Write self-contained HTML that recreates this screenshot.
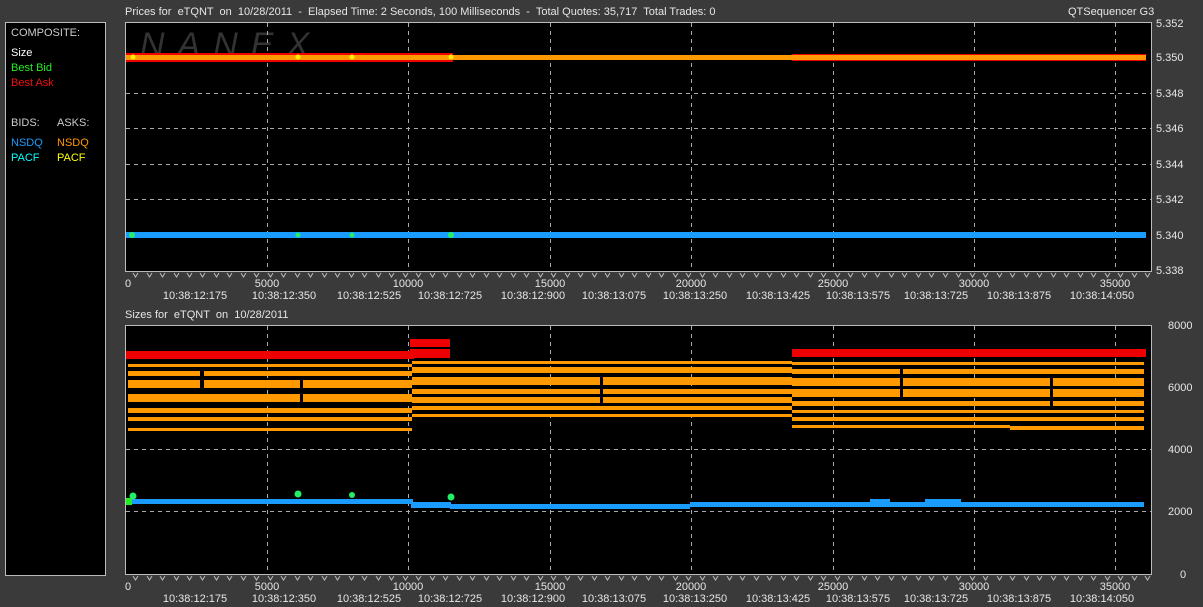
<!DOCTYPE html>
<html><head><meta charset="utf-8"><style>
html,body{margin:0;padding:0;background:#3a3a3a;width:1203px;height:607px;overflow:hidden}
svg{display:block}
text{font-family:"Liberation Sans",Arial,sans-serif;font-size:11px;fill:#e6e6e6;white-space:pre}
</style></head><body>
<svg width="1203" height="607" viewBox="0 0 1203 607" xml:space="preserve">
<rect width="1203" height="607" fill="#3a3a3a"/>
<rect x="5.5" y="22.5" width="100" height="553" fill="#000" stroke="#bbb"/>
<text x="11" y="36" style="fill:#ccc">COMPOSITE:</text>
<text x="11" y="56" style="fill:#fff">Size</text>
<text x="11" y="71" style="fill:#22ee22">Best Bid</text>
<text x="11" y="86" style="fill:#ee1111">Best Ask</text>
<text x="11" y="126" style="fill:#ccc">BIDS:</text>
<text x="57" y="126" style="fill:#ccc">ASKS:</text>
<text x="11" y="146" style="fill:#1a9cff">NSDQ</text>
<text x="57" y="146" style="fill:#ff9900">NSDQ</text>
<text x="11" y="161" style="fill:#00ffff">PACF</text>
<text x="57" y="161" style="fill:#ffff00">PACF</text>

<text x="125" y="15">Prices for  eTQNT  on  10/28/2011  -  Elapsed Time: 2 Seconds, 100 Milliseconds  -  Total Quotes: 35,717  Total Trades: 0</text>
<text x="1068" y="15">QTSequencer G3</text>
<text x="125" y="318">Sizes for  eTQNT  on  10/28/2011</text>

<rect x="125.5" y="22.5" width="1026" height="249" fill="#000" stroke="#bbb"/>
<text x="140" y="56" style="font-size:34px;font-style:italic;fill:#333;letter-spacing:13px">NANEX</text>
<g stroke="#aaa" stroke-dasharray="4,4" stroke-width="1">
<line x1="267.5" y1="23" x2="267.5" y2="271"/><line x1="408.5" y1="23" x2="408.5" y2="271"/>
<line x1="550.5" y1="23" x2="550.5" y2="271"/><line x1="691.5" y1="23" x2="691.5" y2="271"/>
<line x1="833.5" y1="23" x2="833.5" y2="271"/><line x1="974.5" y1="23" x2="974.5" y2="271"/>
<line x1="1115.5" y1="23" x2="1115.5" y2="271"/>
<line x1="126" y1="93.5" x2="1151" y2="93.5"/><line x1="126" y1="128.5" x2="1151" y2="128.5"/>
<line x1="126" y1="164.5" x2="1151" y2="164.5"/><line x1="126" y1="199.5" x2="1151" y2="199.5"/>
</g>
<rect x="126" y="53" width="327" height="9" fill="#ee0000"/>
<rect x="792" y="54" width="354" height="7" fill="#ee0000"/>
<rect x="126" y="55" width="1020" height="5" fill="#ff9900"/>
<g fill="#ffee00"><circle cx="133" cy="57" r="2.5"/><circle cx="298" cy="57" r="2.5"/><circle cx="352" cy="57" r="2.5"/><circle cx="451" cy="57" r="2.5"/></g>
<rect x="126" y="232" width="1020" height="6" fill="#1a9cff"/>
<g fill="#22ee66"><circle cx="132" cy="235" r="3"/><circle cx="298" cy="235" r="2.5"/><circle cx="352" cy="235" r="2.5"/><circle cx="451" cy="235" r="3"/></g>

<text x="1156" y="27">5.352</text><text x="1156" y="61">5.350</text><text x="1156" y="97">5.348</text>
<text x="1156" y="132">5.346</text><text x="1156" y="168">5.344</text><text x="1156" y="203">5.342</text>
<text x="1156" y="239">5.340</text><text x="1156" y="274">5.338</text>
<g text-anchor="middle">
<text x="128" y="287">0</text><text x="267" y="287">5000</text><text x="408" y="287">10000</text><text x="550" y="287">15000</text>
<text x="691" y="287">20000</text><text x="833" y="287">25000</text><text x="974" y="287">30000</text><text x="1115" y="287">35000</text>
<text x="195" y="299">10:38:12:175</text><text x="284" y="299">10:38:12:350</text><text x="369" y="299">10:38:12:525</text>
<text x="450" y="299">10:38:12:725</text><text x="533" y="299">10:38:12:900</text><text x="614" y="299">10:38:13:075</text>
<text x="695" y="299">10:38:13:250</text><text x="778" y="299">10:38:13:425</text><text x="858" y="299">10:38:13:575</text>
<text x="936" y="299">10:38:13:725</text><text x="1019" y="299">10:38:13:875</text><text x="1102" y="299">10:38:14:050</text>
</g>

<rect x="125.5" y="325.5" width="1026" height="249" fill="#000" stroke="#bbb"/>
<g stroke="#aaa" stroke-dasharray="4,4" stroke-width="1">
<line x1="267.5" y1="326" x2="267.5" y2="574"/><line x1="408.5" y1="326" x2="408.5" y2="574"/>
<line x1="550.5" y1="326" x2="550.5" y2="574"/><line x1="691.5" y1="326" x2="691.5" y2="574"/>
<line x1="833.5" y1="326" x2="833.5" y2="574"/><line x1="974.5" y1="326" x2="974.5" y2="574"/>
<line x1="1115.5" y1="326" x2="1115.5" y2="574"/>
<line x1="126" y1="449.5" x2="1151" y2="449.5"/><line x1="126" y1="511.5" x2="1151" y2="511.5"/>
</g>
<g fill="#ee0000">
<rect x="126" y="351" width="288" height="8"/>
<rect x="410" y="339" width="40" height="8"/>
<rect x="410" y="349" width="40" height="9"/>
<rect x="792" y="349" width="354" height="8"/>
</g>
<g fill="#ff9900">
<rect x="128" y="364" width="284" height="3"/>
<rect x="128" y="371" width="284" height="5"/>
<rect x="128" y="380" width="284" height="8"/>
<rect x="128" y="394" width="284" height="8"/>
<rect x="128" y="408" width="284" height="5"/>
<rect x="128" y="417" width="284" height="4"/>
<rect x="128" y="428" width="284" height="3"/>
<rect x="412" y="361" width="380" height="3"/>
<rect x="412" y="367" width="380" height="6"/>
<rect x="412" y="377" width="380" height="8"/>
<rect x="412" y="389" width="380" height="5"/>
<rect x="412" y="397" width="380" height="6"/>
<rect x="412" y="406" width="380" height="4"/>
<rect x="412" y="414" width="380" height="3"/>
<rect x="792" y="362" width="352" height="3"/>
<rect x="792" y="369" width="352" height="5"/>
<rect x="792" y="378" width="352" height="8"/>
<rect x="792" y="389" width="352" height="8"/>
<rect x="792" y="401" width="352" height="5"/>
<rect x="792" y="410" width="352" height="3"/>
<rect x="792" y="417" width="352" height="4"/>
<rect x="1010" y="426" width="134" height="4"/>
<rect x="792" y="425" width="218" height="3"/>
</g>
<g fill="#000">
<rect x="200" y="371" width="4" height="17"/><rect x="300" y="380" width="3" height="22"/><rect x="600" y="377" width="3" height="26"/>
<rect x="900" y="369" width="3" height="28"/><rect x="1050" y="378" width="3" height="28"/>
</g>
<g fill="#1a9cff">
<rect x="127" y="499" width="286" height="5"/>
<rect x="411" y="502" width="40" height="6"/>
<rect x="450" y="504" width="240" height="5"/>
<rect x="690" y="502" width="454" height="5"/>
<rect x="870" y="499" width="20" height="4"/>
<rect x="925" y="499" width="36" height="4"/>
</g>
<rect x="126" y="498" width="6" height="7" fill="#22ee22"/>
<g fill="#22ee66"><circle cx="133" cy="496" r="3.5"/><circle cx="298" cy="494" r="3.5"/><circle cx="352" cy="495" r="3"/><circle cx="451" cy="497" r="3.5"/></g>

<text x="1168" y="329">8000</text><text x="1168" y="391">6000</text><text x="1168" y="453">4000</text>
<text x="1168" y="515">2000</text><text x="1180" y="578">0</text>
<g text-anchor="middle">
<text x="128" y="590">0</text><text x="267" y="590">5000</text><text x="408" y="590">10000</text><text x="550" y="590">15000</text>
<text x="691" y="590">20000</text><text x="833" y="590">25000</text><text x="974" y="590">30000</text><text x="1115" y="590">35000</text>
<text x="195" y="602">10:38:12:175</text><text x="284" y="602">10:38:12:350</text><text x="369" y="602">10:38:12:525</text>
<text x="450" y="602">10:38:12:725</text><text x="533" y="602">10:38:12:900</text><text x="614" y="602">10:38:13:075</text>
<text x="695" y="602">10:38:13:250</text><text x="778" y="602">10:38:13:425</text><text x="858" y="602">10:38:13:575</text>
<text x="936" y="602">10:38:13:725</text><text x="1019" y="602">10:38:13:875</text><text x="1102" y="602">10:38:14:050</text>
</g>
<g id="ticks" fill="none" stroke="#bbb" stroke-width="1">
<path d="M133 273l2.5 4 2.5-4M147 273l2.5 4 2.5-4M160 273l2.5 4 2.5-4M174 273l2.5 4 2.5-4M187 273l2.5 4 2.5-4M200 273l2.5 4 2.5-4M214 273l2.5 4 2.5-4M227 273l2.5 4 2.5-4M241 273l2.5 4 2.5-4M254 273l2.5 4 2.5-4M268 273l2.5 4 2.5-4M281 273l2.5 4 2.5-4M295 273l2.5 4 2.5-4M308 273l2.5 4 2.5-4M322 273l2.5 4 2.5-4M335 273l2.5 4 2.5-4M349 273l2.5 4 2.5-4M362 273l2.5 4 2.5-4M376 273l2.5 4 2.5-4M389 273l2.5 4 2.5-4M403 273l2.5 4 2.5-4M416 273l2.5 4 2.5-4M430 273l2.5 4 2.5-4M443 273l2.5 4 2.5-4M457 273l2.5 4 2.5-4M470 273l2.5 4 2.5-4M484 273l2.5 4 2.5-4M497 273l2.5 4 2.5-4M511 273l2.5 4 2.5-4M524 273l2.5 4 2.5-4M538 273l2.5 4 2.5-4M551 273l2.5 4 2.5-4M565 273l2.5 4 2.5-4M578 273l2.5 4 2.5-4M592 273l2.5 4 2.5-4M605 273l2.5 4 2.5-4M619 273l2.5 4 2.5-4M632 273l2.5 4 2.5-4M646 273l2.5 4 2.5-4M659 273l2.5 4 2.5-4M673 273l2.5 4 2.5-4M686 273l2.5 4 2.5-4M700 273l2.5 4 2.5-4M713 273l2.5 4 2.5-4M727 273l2.5 4 2.5-4M740 273l2.5 4 2.5-4M754 273l2.5 4 2.5-4M767 273l2.5 4 2.5-4M781 273l2.5 4 2.5-4M794 273l2.5 4 2.5-4M808 273l2.5 4 2.5-4M821 273l2.5 4 2.5-4M835 273l2.5 4 2.5-4M848 273l2.5 4 2.5-4M862 273l2.5 4 2.5-4M875 273l2.5 4 2.5-4M889 273l2.5 4 2.5-4M902 273l2.5 4 2.5-4M916 273l2.5 4 2.5-4M929 273l2.5 4 2.5-4M943 273l2.5 4 2.5-4M956 273l2.5 4 2.5-4M970 273l2.5 4 2.5-4M983 273l2.5 4 2.5-4M997 273l2.5 4 2.5-4M1010 273l2.5 4 2.5-4M1024 273l2.5 4 2.5-4M1037 273l2.5 4 2.5-4M1051 273l2.5 4 2.5-4M1064 273l2.5 4 2.5-4M1078 273l2.5 4 2.5-4M1091 273l2.5 4 2.5-4M1105 273l2.5 4 2.5-4M1118 273l2.5 4 2.5-4M1132 273l2.5 4 2.5-4M1145 273l2.5 4 2.5-4"/>
</g>
<use href="#ticks" transform="translate(0,303)"/>
</svg>
</body></html>
